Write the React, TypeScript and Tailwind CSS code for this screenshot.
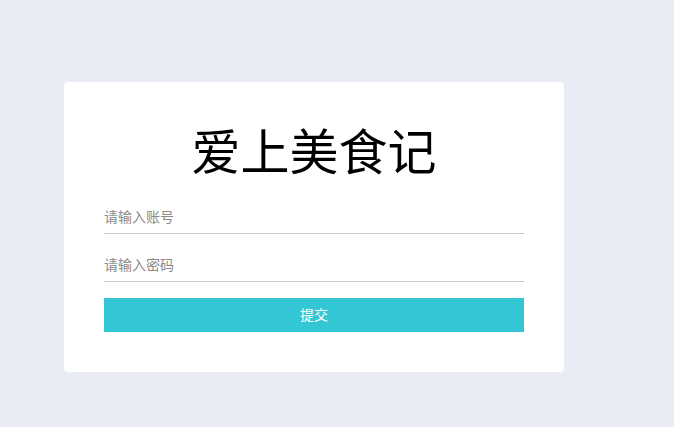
export default function App() {
  return (
    <div className="min-h-screen w-full bg-[#e9ecf4] pt-[82px] pl-[64px] font-['Liberation_Sans','Noto_Sans_CJK_SC',sans-serif]">
      <div className="flex w-[500px] flex-col items-center rounded-[4px] bg-white px-10 pt-[46px] pb-10">
        <h1 className="text-[49px] leading-[50px] text-black">爱上美食记</h1>
        <form className="mt-[22px] flex w-[420px] flex-col">
          <input
            className="h-[34px] w-full border-b border-[#c3c7d0] text-[14px] text-[#333] outline-none placeholder:text-[#8a8a8a]"
            placeholder="请输入账号"
          />
          <input
            type="password"
            className="mt-[14px] h-[34px] w-full border-b border-[#c3c7d0] text-[14px] text-[#333] outline-none placeholder:text-[#8a8a8a]"
            placeholder="请输入密码"
          />
          <button
            type="button"
            className="mt-4 h-[34px] w-full bg-[#33c6d4] text-[14px] text-white"
          >
            提交
          </button>
        </form>
      </div>
    </div>
  );
}
